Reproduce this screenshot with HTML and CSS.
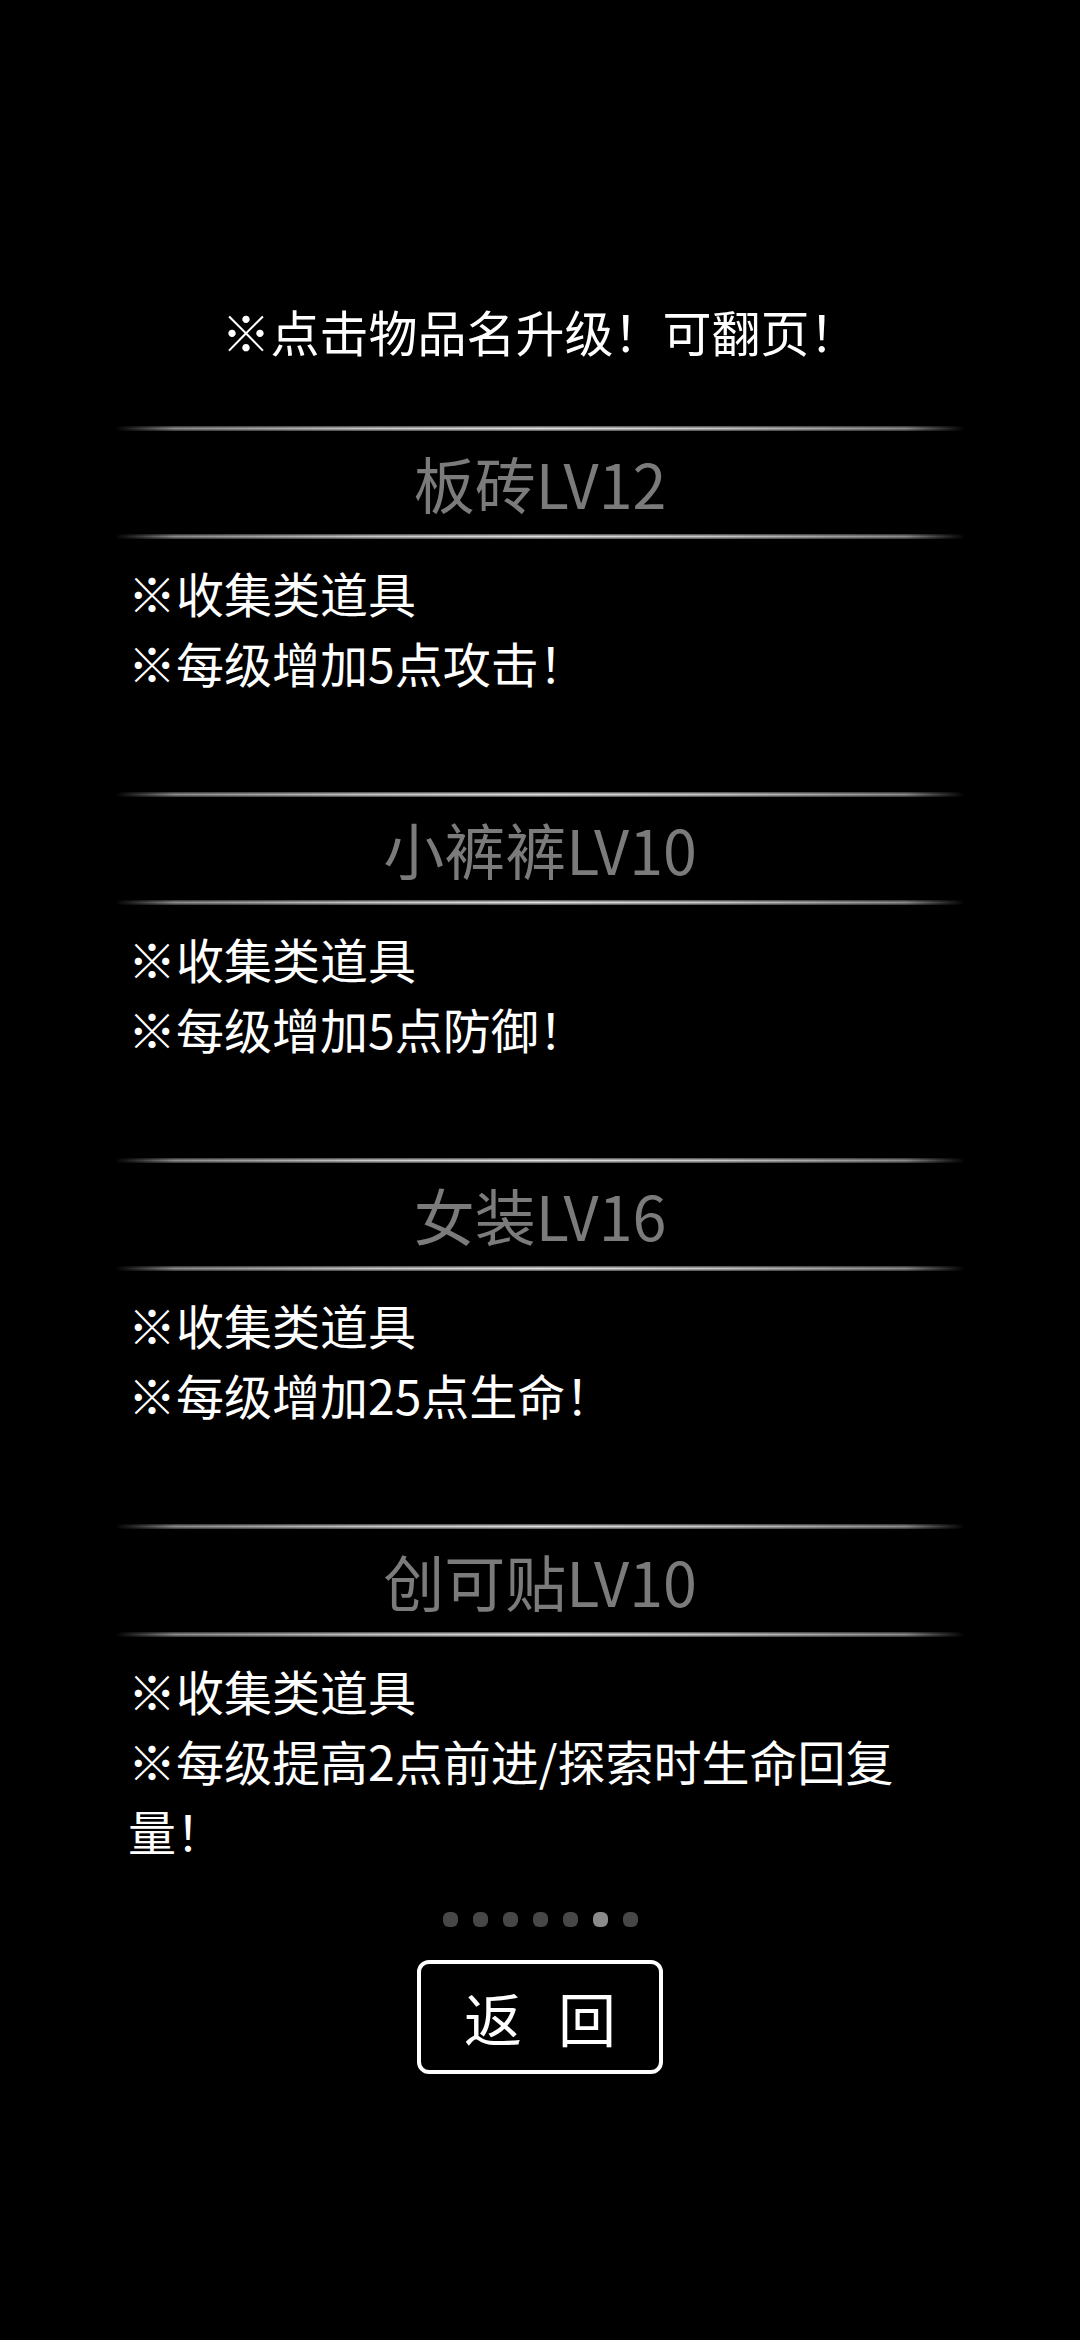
FILE: index.html
```html
<!DOCTYPE html>
<html lang="zh-CN">
<head>
    <meta charset="UTF-8">
    <meta name="viewport" content="width=device-width, initial-scale=1.0">
    <title>物品</title>
    <link rel="stylesheet" href="styles.css">
</head>
<body>
    <div class="page">
        <div class="tip">※点击物品名升级！可翻页！</div>

        <div class="item">
            <div class="rule"></div>
            <div class="item-name">板砖LV12</div>
            <div class="rule"></div>
            <div class="item-desc">
                <p>※收集类道具</p>
                <p>※每级增加5点攻击！</p>
            </div>
        </div>

        <div class="item">
            <div class="rule"></div>
            <div class="item-name">小裤裤LV10</div>
            <div class="rule"></div>
            <div class="item-desc">
                <p>※收集类道具</p>
                <p>※每级增加5点防御！</p>
            </div>
        </div>

        <div class="item">
            <div class="rule"></div>
            <div class="item-name">女装LV16</div>
            <div class="rule"></div>
            <div class="item-desc">
                <p>※收集类道具</p>
                <p>※每级增加25点生命！</p>
            </div>
        </div>

        <div class="item last">
            <div class="rule"></div>
            <div class="item-name">创可贴LV10</div>
            <div class="rule"></div>
            <div class="item-desc">
                <p>※收集类道具</p>
                <p>※每级提高2点前进/探索时生命回复量！</p>
            </div>
        </div>

        <div class="pager">
            <span class="dot"></span>
            <span class="dot"></span>
            <span class="dot"></span>
            <span class="dot"></span>
            <span class="dot"></span>
            <span class="dot active"></span>
            <span class="dot"></span>
        </div>

        <button class="back">返回</button>
    </div>
</body>
</html>
```

FILE: styles.css
```css
html, body {
    margin: 0;
    padding: 0;
    background-color: #000;
}
body {
    font-family: "Noto Sans CJK SC", "Noto Sans", sans-serif;
    color: #fff;
}
.page {
    width: 1080px;
    min-height: 2340px;
    padding-top: 296px;
    box-sizing: border-box;
}
.tip {
    font-size: 49px;
    line-height: 70px;
    text-align: center;
    margin-bottom: 60px;
}
.item {
    margin-bottom: 95px;
}
.item.last {
    margin-bottom: 47px;
}
.rule {
    width: 850px;
    height: 5px;
    margin: 0 auto;
    background: linear-gradient(to right, rgba(255,255,255,0) 0%, #8a8a8a 7%, #c8c8c8 30%, #e0e0e0 50%, #c8c8c8 70%, #8a8a8a 93%, rgba(255,255,255,0) 100%);
    -webkit-mask: linear-gradient(to bottom, rgba(0,0,0,.35), #000 50%, rgba(0,0,0,.35));
}
.item-name {
    font-size: 61px;
    line-height: 103px;
    text-align: center;
    color: #7b7b7b;
}
.item-desc {
    padding: 18px 150px 0 128px;
    font-size: 48px;
    line-height: 70px;
}
.item-desc p {
    margin: 0;
}
.pager {
    display: flex;
    justify-content: center;
    gap: 15px;
    margin-bottom: 33px;
}
.dot {
    width: 15px;
    height: 15px;
    border-radius: 6px;
    background-color: #474747;
}
.dot.active {
    background-color: #8a8a8a;
}
.back {
    display: block;
    margin: 0 auto;
    width: 246px;
    height: 114px;
    border: 4px solid #fff;
    border-radius: 12px;
    background: #000;
    color: #fff;
    font-family: "Noto Sans CJK SC", "Noto Sans", sans-serif;
    font-size: 58px;
    letter-spacing: 36px;
    text-indent: 36px;
    padding: 0;
    cursor: pointer;
}
```
